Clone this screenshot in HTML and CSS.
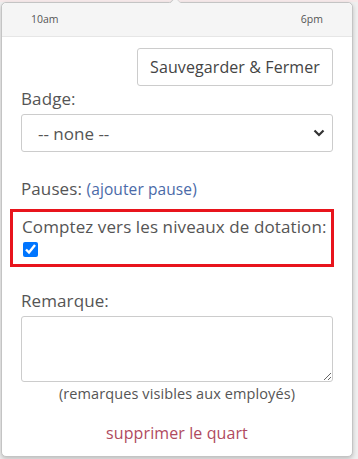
FILE: index.html
```html
<!DOCTYPE html>
<html lang="fr">
<head>
    <meta charset="UTF-8">
    <meta name="viewport" content="width=device-width, initial-scale=1.0">
    <title>Modifier le quart</title>
    <link rel="stylesheet" href="styles.css">
</head>
<body>
    <div class="calendar">
        <div class="shift-popup">
            <div class="arrow"></div>
            <div class="popup-header">
                <span>10am</span>
                <span>6pm</span>
            </div>
            <div class="popup-body">
                <div class="actions">
                    <button type="button" class="btn-save">Sauvegarder &amp; Fermer</button>
                </div>

                <label for="badge" class="field-label">Badge:</label>
                <select id="badge" class="badge-select">
                    <option>-- none --</option>
                </select>

                <p class="breaks">Pauses: <a href="#">(ajouter pause)</a></p>

                <div class="staffing highlight">
                    <label for="staffing" class="field-label">Comptez vers les niveaux de dotation:</label>
                    <input type="checkbox" id="staffing" checked>
                </div>

                <label for="note" class="field-label note-label">Remarque:</label>
                <textarea id="note" class="note"></textarea>
                <p class="note-help">(remarques visibles aux employés)</p>

                <a href="#" class="delete-link">supprimer le quart</a>
            </div>
        </div>
    </div>
</body>
</html>
```

FILE: styles.css
```css
body {
    margin: 0;
    font-family: "Open Sans", Arial, sans-serif;
    background: #f2f2f2;
}
.calendar {
    height: 459px;
    padding: 2px 0 0 1px;
    box-sizing: border-box;
    background:
        linear-gradient(#f6e9ea, #f6e9ea) top left / 100% 2px no-repeat,
        #efefef;
}
.shift-popup {
    position: relative;
    width: 350px;
    background: #fff;
    border: 1px solid #c4c4c4;
    border-radius: 5px;
    box-shadow: 0 2px 4px rgba(0, 0, 0, 0.2);
}
.arrow {
    position: absolute;
    top: -6px;
    left: 167px;
    width: 16px;
    height: 16px;
    background: #f5f5f5;
    border-left: 1px solid #c4c4c4;
    border-top: 1px solid #c4c4c4;
    transform: rotate(45deg) scale(0.9, 0.5);
}
.popup-header {
    position: relative;
    display: flex;
    justify-content: space-between;
    height: 33px;
    padding: 0 29px 0 29px;
    background: #f5f5f5;
    border-bottom: 1px solid #e6e6e6;
    border-radius: 5px 5px 0 0;
    font-size: 10.5px;
    line-height: 33px;
    color: #555;
}
.popup-body {
    padding: 11px 19px 12px 19px;
    color: #555;
    font-size: 17px;
    letter-spacing: 0.1px;
}
.actions {
    display: flex;
    justify-content: flex-end;
}
.btn-save {
    height: 38px;
    padding: 0 12px;
    font-family: inherit;
    font-size: 16px;
    letter-spacing: 0.1px;
    color: #444;
    background: #fff;
    border: 1px solid #ccc;
    border-radius: 3px;
}
.field-label {
    display: block;
    line-height: 22px;
    margin-top: 2px;
    margin-bottom: 4px;
}
.badge-select {
    display: block;
    width: 100%;
    height: 38px;
    padding: 0 16px;
    font-family: inherit;
    font-size: 17px;
    color: #555;
    background: #fff url("data:image/svg+xml,%3Csvg xmlns='http://www.w3.org/2000/svg' width='12' height='8' viewBox='0 0 12 8'%3E%3Cpath d='M1.5 1.5 6 6l4.5-4.5' fill='none' stroke='%23333' stroke-width='2.2'/%3E%3C/svg%3E") no-repeat right 7px center;
    border: 1px solid #ccc;
    border-radius: 3px;
    appearance: none;
}
.breaks {
    margin: 26px 0 0;
    line-height: 22px;
}
.breaks a {
    color: #4a6aa8;
    text-decoration: none;
    font-size: 15.5px;
}
.highlight {
    margin: 9px -1px 0 -11px;
    padding: 4px 0 7px 9px;
    border: 3px solid #e8141c;
}
.staffing .field-label {
    margin: 0 0 4px;
}
.staffing input {
    display: block;
    width: 15px;
    height: 15px;
    margin: 0 0 0 1px;
    accent-color: #0075ff;
}
.note-label {
    margin-top: 23px;
}
.note {
    display: block;
    width: 100%;
    height: 66px;
    box-sizing: border-box;
    border: 1px solid #ccc;
    border-radius: 3px;
    resize: vertical;
}
.note-help {
    margin: 2px 0 0;
    text-align: center;
    font-size: 14.5px;
    line-height: 20px;
}
.delete-link {
    display: block;
    margin-top: 18px;
    text-align: center;
    font-size: 16px;
    color: #b04a5e;
    text-decoration: none;
    line-height: 22px;
}
```
